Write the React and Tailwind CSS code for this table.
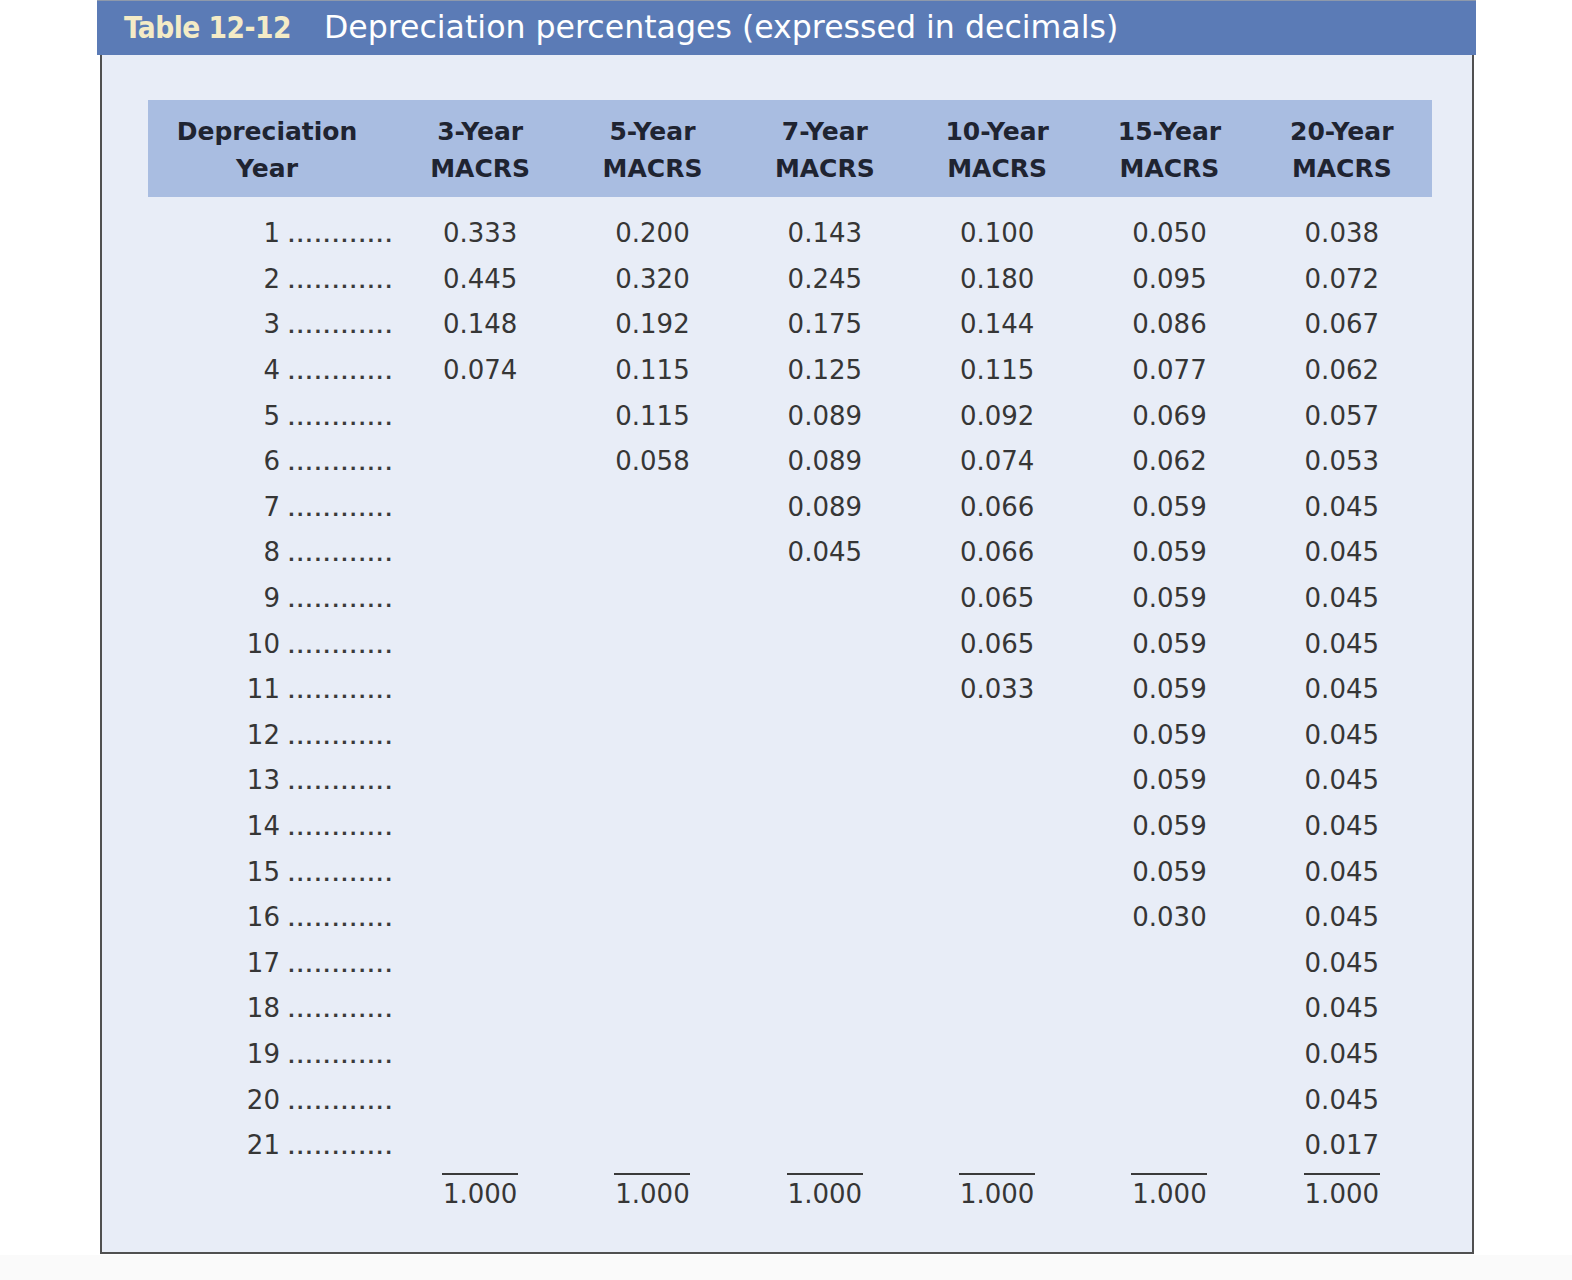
const rows = [
  ["1", "0.333", "0.200", "0.143", "0.100", "0.050", "0.038"],
  ["2", "0.445", "0.320", "0.245", "0.180", "0.095", "0.072"],
  ["3", "0.148", "0.192", "0.175", "0.144", "0.086", "0.067"],
  ["4", "0.074", "0.115", "0.125", "0.115", "0.077", "0.062"],
  ["5", "", "0.115", "0.089", "0.092", "0.069", "0.057"],
  ["6", "", "0.058", "0.089", "0.074", "0.062", "0.053"],
  ["7", "", "", "0.089", "0.066", "0.059", "0.045"],
  ["8", "", "", "0.045", "0.066", "0.059", "0.045"],
  ["9", "", "", "", "0.065", "0.059", "0.045"],
  ["10", "", "", "", "0.065", "0.059", "0.045"],
  ["11", "", "", "", "0.033", "0.059", "0.045"],
  ["12", "", "", "", "", "0.059", "0.045"],
  ["13", "", "", "", "", "0.059", "0.045"],
  ["14", "", "", "", "", "0.059", "0.045"],
  ["15", "", "", "", "", "0.059", "0.045"],
  ["16", "", "", "", "", "0.030", "0.045"],
  ["17", "", "", "", "", "", "0.045"],
  ["18", "", "", "", "", "", "0.045"],
  ["19", "", "", "", "", "", "0.045"],
  ["20", "", "", "", "", "", "0.045"],
  ["21", "", "", "", "", "", "0.017"],
];

const headers = ["3-Year", "5-Year", "7-Year", "10-Year", "15-Year", "20-Year"];

const grid = "grid grid-cols-[246px_repeat(6,172.33px)]";

export default function App() {
  return (
    <div className="w-[1572px] h-[1280px] flex flex-col bg-white font-['DejaVu_Sans',sans-serif]">
      <div className="bg-white">
        <div className="ml-[97px] w-[1379px] h-[55px] bg-[#5b7bb6] border-t border-[#8e99ab] flex items-center pl-[27px]">
          <span className="font-['DejaVu_Sans_Condensed','DejaVu_Sans',sans-serif] font-bold text-[29.5px] tracking-[-0.5px] text-[#f4ebc6]">
            Table 12-12
          </span>
          <span className="ml-[33px] text-[31.6px] text-white">
            Depreciation percentages (expressed in decimals)
          </span>
        </div>
        <div className="ml-[100px] w-[1374px] bg-[#e8edf7] border-x-2 border-b-2 border-[#505050] pt-[45px] pb-[38px]">
          <div className="ml-[46px] w-[1284px] h-[97px] bg-[#a9bde1] flex items-center pt-[2px]">
            <div className={grid}>
              <div className="text-center font-bold text-[25px] leading-[37px] text-[#1f2431] pr-[8px]">
                <div>Depreciation</div>
                <div>Year</div>
              </div>
              {headers.map((h) => (
                <div key={h} className="text-center font-bold text-[25px] leading-[37px] text-[#1f2431]">
                  <div>{h}</div>
                  <div>MACRS</div>
                </div>
              ))}
            </div>
          </div>
          <div className="ml-[46px] w-[1284px] mt-[14px] text-[26px] text-[#363636]">
            {rows.map((r) => (
              <div key={r[0]} className={grid + " h-[45.6px] items-center"}>
                <div className="flex justify-end items-baseline">
                  <span>{r[0]}</span>
                  <span className="ml-[8px] text-[18px] tracking-[2px] text-[#3a3a3a] font-bold">............</span>
                </div>
                {r.slice(1).map((v, i) => (
                  <div key={i} className="text-center">
                    {v}
                  </div>
                ))}
              </div>
            ))}
            <div className={grid + " h-[45.6px] items-start"}>
              <div></div>
              {headers.map((h) => (
                <div key={h} className="flex justify-center">
                  <span className="mt-[5px] inline-block border-t-2 border-[#3a3a3a] w-[76px] text-center leading-[38px]">
                    1.000
                  </span>
                </div>
              ))}
            </div>
          </div>
        </div>
      </div>
      <div className="flex-1 mt-[1px] bg-[#fafafa]"></div>
    </div>
  );
}
